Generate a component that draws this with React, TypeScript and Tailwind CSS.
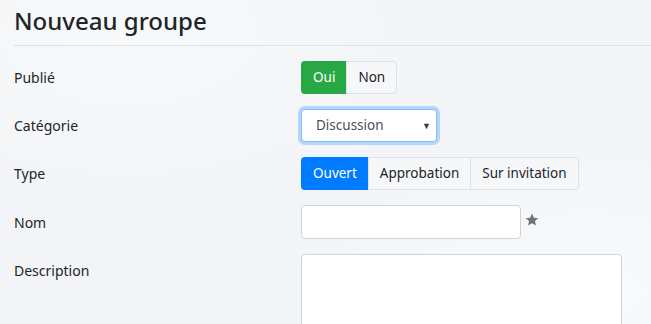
import React from 'react';

/**
 * NewGroupForm - formulaire "Nouveau groupe"
 */

const font = { fontFamily: '"Noto Sans", "Open Sans", Arial, sans-serif' };

const Label: React.FC<{ children: React.ReactNode }> = ({ children }) => (
  <div className="w-[287px] h-[33px] flex items-center text-[14px] text-[#212529] shrink-0">
    {children}
  </div>
);

const Row: React.FC<{ label: string; top?: boolean; children: React.ReactNode }> = ({
  label,
  top,
  children,
}) => (
  <div className={top ? 'flex items-start' : 'flex items-center'}>
    <Label>{label}</Label>
    {children}
  </div>
);

const SegButton: React.FC<{
  active?: boolean;
  color?: string;
  first?: boolean;
  last?: boolean;
  children: React.ReactNode;
}> = ({ active, color, first, last, children }) => (
  <button
    className={[
      'h-[33px] px-[11px] text-[13.5px] border leading-none',
      first ? 'rounded-l-[4px]' : '-ml-px',
      last ? 'rounded-r-[4px]' : '',
      active ? `${color} text-white border-transparent` : 'bg-[#f6f7f9] text-[#212529] border-[#dee2e6]',
    ].join(' ')}
  >
    {children}
  </button>
);

export default function App() {
  return (
    <div
      className="w-[651px] h-[324px] overflow-hidden bg-[#f2f4f7] bg-[radial-gradient(ellipse_at_20%_10%,#f8f9fa_0%,transparent_45%),radial-gradient(ellipse_at_90%_90%,#f9fafb_0%,transparent_40%)]"
      style={font}
    >
      <div className="pl-[14px]">
        {/* Header */}
        <div className="h-[46px] border-b border-[#dfe2e6] pt-[6px]">
          <h3 className="text-[24px] font-medium leading-[30px] text-[#212529]">Nouveau groupe</h3>
        </div>

        {/* Form */}
        <div className="mt-[15px] flex flex-col gap-[15px]">
          <Row label="Publié">
            <div className="flex">
              <SegButton active color="bg-[#28a745]" first>
                Oui
              </SegButton>
              <SegButton last>Non</SegButton>
            </div>
          </Row>

          <Row label="Catégorie">
            <div className="relative w-[136px] h-[33px] bg-white border border-[#80bdff] rounded-[4px] shadow-[0_0_0_3px_rgba(0,123,255,0.25)] flex items-center pl-[14px] text-[13.5px] text-[#495057]">
              Discussion
              <span className="absolute right-[5px] top-[9px] text-[9px] text-[#343a40]">▼</span>
            </div>
          </Row>

          <Row label="Type">
            <div className="flex">
              <SegButton active color="bg-[#007bff]" first>
                Ouvert
              </SegButton>
              <SegButton>Approbation</SegButton>
              <SegButton last>Sur invitation</SegButton>
            </div>
          </Row>

          <Row label="Nom">
            <div className="flex items-center">
              <div className="w-[220px] h-[34px] bg-white border border-[#ced4da] rounded-[4px]" />
              <svg viewBox="0 0 24 24" className="ml-[4px] -mt-[4px] w-[14px] h-[14px] fill-[#6c757d]">
                <path d="M12 1l3.2 7 7.6.8-5.7 5.1 1.6 7.6L12 17.6l-6.7 3.9 1.6-7.6L1.2 8.8 8.8 8z" />
              </svg>
            </div>
          </Row>

          <Row label="Description" top>
            <div className="w-[321px] h-[90px] bg-white border border-[#ced4da] rounded-[4px]" />
          </Row>
        </div>
      </div>
    </div>
  );
}
